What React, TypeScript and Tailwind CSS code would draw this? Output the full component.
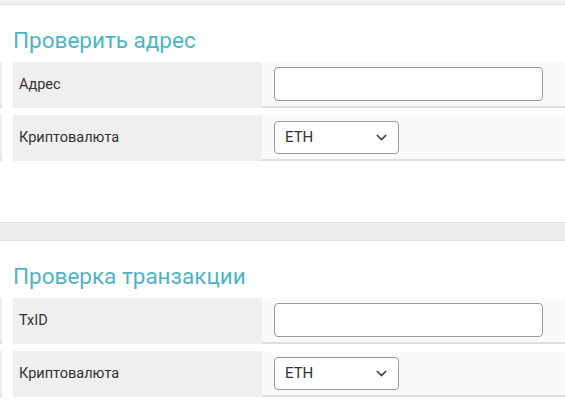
import { ChevronDown } from 'lucide-react'

interface Row {
  label: string
  kind: 'input' | 'select'
}

function FormRow({ label, kind }: Row) {
  return (
    <div className="flex h-[46px]">
      {/* clipped edge of the previous cell */}
      <div className="w-[2px] bg-[#ececec] border-b-2 border-[#dedede]" />
      <div className="w-[11px]" />
      <div className="w-[249px] bg-[#efefef] flex items-center pl-[6px] text-[14.5px] text-[#333]">
        {label}
      </div>
      <div className="flex-1 bg-[#fafafa] border-b-2 border-[#dedede] flex items-center pl-[12px]">
        {kind === 'input' ? (
          <input
            className="w-[269px] h-[34px] bg-white border border-[#9a9a9a] rounded-[4px] outline-none"
            type="text"
          />
        ) : (
          <div className="w-[125px] h-[33px] bg-white border border-[#9a9a9a] rounded-[4px] flex items-center justify-between pl-[10px] pr-[8px] text-[15px] text-[#333]">
            <span>ETH</span>
            <ChevronDown className="w-[17px] h-[17px] text-[#444]" strokeWidth={2} />
          </div>
        )}
      </div>
    </div>
  )
}

function Card({ title, rows, height }: { title: string; rows: Row[]; height: string }) {
  return (
    <div className={`bg-white ${height}`}>
      <div className="h-[57px] pl-[13px] pt-[20px] text-[22.5px] leading-[30px] text-[#4fb4c2]">
        {title}
      </div>
      <div className="flex flex-col gap-[7px]">
        {rows.map((r) => (
          <FormRow key={r.label} {...r} />
        ))}
      </div>
    </div>
  )
}

export default function App() {
  return (
    <div className="w-[565px] h-[413px] overflow-hidden bg-[#eeeeee] font-['Roboto',sans-serif]">
      <div className="h-[5px] border-b border-[#e2e2e2]" />
      <Card
        title="Проверить адрес"
        height="h-[217px]"
        rows={[
          { label: 'Адрес', kind: 'input' },
          { label: 'Криптовалюта', kind: 'select' },
        ]}
      />
      <div className="h-[19px] border-y border-[#e2e2e2]" />
      <Card
        title="Проверка транзакции"
        height="h-[200px]"
        rows={[
          { label: 'TxID', kind: 'input' },
          { label: 'Криптовалюта', kind: 'select' },
        ]}
      />
    </div>
  )
}
